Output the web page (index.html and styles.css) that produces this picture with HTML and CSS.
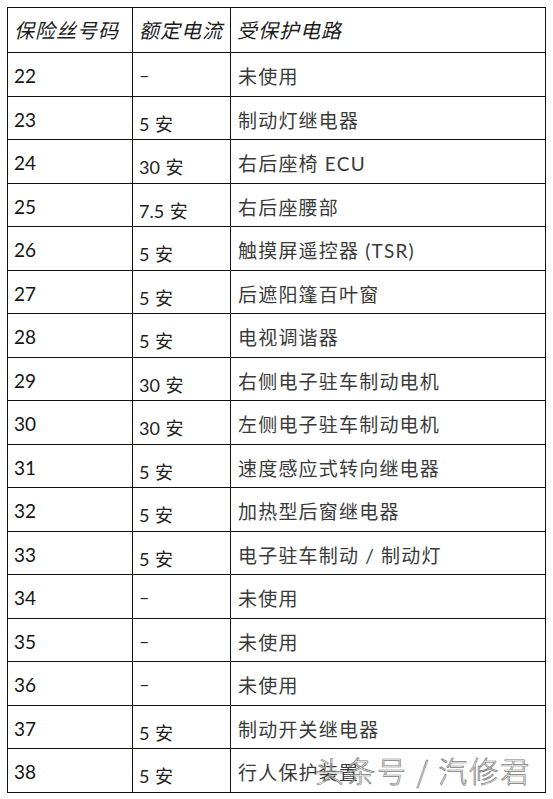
FILE: index.html
```html
<!DOCTYPE html>
<html lang="zh-CN">
<head>
<meta charset="utf-8">
<title>保险丝</title>
<link rel="stylesheet" href="styles.css">
</head>
<body>
<div class="page">
  <div class="fuse-table">
    <div class="cell head">保险丝号码</div>
    <div class="cell head">额定电流</div>
    <div class="cell head">受保护电路</div>

    <div class="cell num">22</div><div class="cell amp dash">–</div><div class="cell circ">未使用</div>
    <div class="cell num">23</div><div class="cell amp">5 安</div><div class="cell circ">制动灯继电器</div>
    <div class="cell num">24</div><div class="cell amp">30 安</div><div class="cell circ">右后座椅 ECU</div>
    <div class="cell num">25</div><div class="cell amp">7.5 安</div><div class="cell circ">右后座腰部</div>
    <div class="cell num">26</div><div class="cell amp">5 安</div><div class="cell circ">触摸屏遥控器 (TSR)</div>
    <div class="cell num">27</div><div class="cell amp">5 安</div><div class="cell circ">后遮阳篷百叶窗</div>
    <div class="cell num">28</div><div class="cell amp">5 安</div><div class="cell circ">电视调谐器</div>
    <div class="cell num">29</div><div class="cell amp">30 安</div><div class="cell circ">右侧电子驻车制动电机</div>
    <div class="cell num">30</div><div class="cell amp">30 安</div><div class="cell circ">左侧电子驻车制动电机</div>
    <div class="cell num">31</div><div class="cell amp">5 安</div><div class="cell circ">速度感应式转向继电器</div>
    <div class="cell num">32</div><div class="cell amp">5 安</div><div class="cell circ">加热型后窗继电器</div>
    <div class="cell num">33</div><div class="cell amp">5 安</div><div class="cell circ">电子驻车制动 / 制动灯</div>
    <div class="cell num">34</div><div class="cell amp dash">–</div><div class="cell circ">未使用</div>
    <div class="cell num">35</div><div class="cell amp dash">–</div><div class="cell circ">未使用</div>
    <div class="cell num">36</div><div class="cell amp dash">–</div><div class="cell circ">未使用</div>
    <div class="cell num">37</div><div class="cell amp">5 安</div><div class="cell circ">制动开关继电器</div>
    <div class="cell num">38</div><div class="cell amp">5 安</div><div class="cell circ last">行人保护装置<span class="watermark">头条号 / 汽修君</span></div>
  </div>
</div>
</body>
</html>
```

FILE: styles.css
```css
html, body {
  margin: 0;
  padding: 0;
  background: #ffffff;
}

.page {
  padding: 7px 0 0 7px;
}

.fuse-table {
  display: grid;
  grid-template-columns: 125px 98px 315px;
  grid-template-rows: 45px;
  grid-auto-rows: 43.5px;
  width: 539px;
  box-sizing: border-box;
  border-top: 1px solid #111;
  border-left: 1px solid #111;
  font-family: "Lato", "Noto Sans CJK SC", sans-serif;
  color: #2e2e2e;
}

.cell {
  box-sizing: border-box;
  border-right: 1px solid #111;
  border-bottom: 1px solid #111;
  font-size: 18px;
  line-height: 22px;
  white-space: nowrap;
}

.head {
  display: flex;
  align-items: center;
  padding-left: 6px;
  font-size: 20px;
  font-style: italic;
  color: #1a1a1a;
  letter-spacing: 1px;
}

.num {
  padding: 12px 0 0 6px;
  color: #151515;
  font-size: 19px;
}

.amp {
  padding: 16px 0 0 6px;
  color: #222;
  font-size: 18px;
  word-spacing: 1px;
}

.amp.dash {
  padding-top: 11px;
}

.circ {
  padding: 13px 0 0 7px;
  font-size: 19px;
  letter-spacing: 1.2px;
  color: #3a3a3a;
}

.last {
  position: relative;
}

.watermark {
  position: absolute;
  left: 84px;
  top: 5px;
  font-family: "Noto Sans CJK SC", sans-serif;
  font-size: 29px;
  line-height: 32px;
  font-weight: 300;
  letter-spacing: 2px;
  color: rgba(255, 255, 255, 0.55);
  -webkit-text-stroke: 0.7px #7a7a7a;
}
```
